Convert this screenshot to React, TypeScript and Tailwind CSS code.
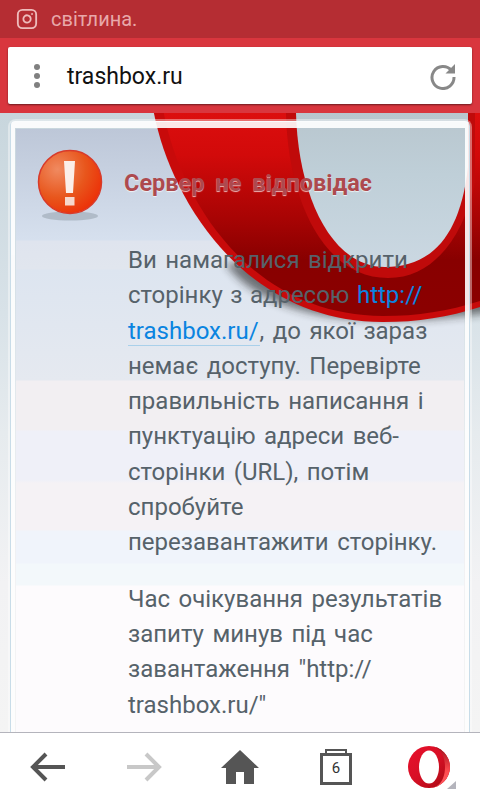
import { Instagram } from 'lucide-react';

function OperaBackdrop() {
  return (
    <svg className="absolute inset-0 w-full h-full" viewBox="0 0 480 619" preserveAspectRatio="none">
      <defs>
        <linearGradient id="ring" gradientUnits="userSpaceOnUse" x1="0" y1="0" x2="0" y2="210">
          <stop offset="0" stopColor="#dc0e0e" />
          <stop offset="0.2" stopColor="#d20a0a" />
          <stop offset="0.5" stopColor="#a80404" />
          <stop offset="0.7" stopColor="#880000" />
          <stop offset="1" stopColor="#8c0000" />
        </linearGradient>
        <linearGradient id="hole" gradientUnits="userSpaceOnUse" x1="0" y1="0" x2="0" y2="154">
          <stop offset="0" stopColor="#b8c6ce" />
          <stop offset="0.4" stopColor="#bfcfd8" />
          <stop offset="1" stopColor="#cbd8e2" />
        </linearGradient>
        <filter id="soft" x="-20%" y="-40%" width="140%" height="180%">
          <feGaussianBlur stdDeviation="4" />
        </filter>
      </defs>
      <path d="M225 150C270 212 380 216 500 198V150Z" fill="#222" opacity="0.6" filter="url(#soft)" />
      <path d="M150 -60V-30C155 60 230 209 383 209C425 209 460 202 500 187V-60Z" fill="#c80a0a" />
      <path d="M160 -60V-30C165 60 236 203 383 203C425 203 460 196 500 181V-60Z" fill="url(#ring)" />
      <path d="M286 -60V0C288 90 325 165 388 165C433 165 463 125 475 70V-60Z" fill="#c00a0a" />
      <path d="M296 -60V0C298 80 330 154 385 154C430 154 460 125 468 54V-60Z" fill="url(#hole)" />
    </svg>
  );
}

function ErrorBadge() {
  return (
    <svg width="72" height="74" viewBox="0 0 72 74" className="shrink-0">
      <defs>
        <radialGradient id="ball" cx="0.3" cy="0.3" r="0.9">
          <stop offset="0" stopColor="#f08a60" />
          <stop offset="0.5" stopColor="#e8561c" />
          <stop offset="1" stopColor="#ee2200" />
        </radialGradient>
      </defs>
      <ellipse cx="36" cy="67" rx="28" ry="4.5" fill="#7f8c96" opacity="0.4" />
      <circle cx="36" cy="33" r="31.5" fill="url(#ball)" stroke="#d83a2a" strokeWidth="1.5" />
      <path d="M30 12H41L39 44H32Z" fill="#fbefe9" />
      <rect x="31" y="48" width="9.5" height="8.5" fill="#f6d8cc" />
    </svg>
  );
}

export default function App() {
  return (
    <div className="w-[480px] h-[800px] flex flex-col overflow-hidden bg-white font-['Roboto',sans-serif]">
      <div className="h-[38px] bg-[#b52d33] flex items-center pl-[16px] pb-[1px] gap-[13px] text-[#e8a8aa]">
        <Instagram size={22} color="#eebcbc" strokeWidth={2} />
        <span className="text-[20px]">світлина.</span>
      </div>

      <div className="h-[75px] bg-[#d9363e] px-[8px] pt-[9px]">
        <div className="h-[57px] bg-white rounded-[2px] shadow-[0_1px_2px_rgba(0,0,0,0.5)] flex items-center">
          <div className="w-[59px] flex flex-col items-center gap-[3px] pr-[1px] mr-0">
            <span className="w-[6px] h-[6px] rounded-full bg-[#808080]" />
            <span className="w-[6px] h-[6px] rounded-full bg-[#808080]" />
            <span className="w-[6px] h-[6px] rounded-full bg-[#808080]" />
          </div>
          <span className="flex-1 text-[23px] text-[#111] pt-[3px]">trashbox.ru</span>
          <svg width="28" height="28" viewBox="0 0 28 28" className="mr-[15px]" fill="none">
            <path d="M22.5 8.5A11 11 0 1 0 25 15" stroke="#888" strokeWidth="3" />
            <path d="M16.5 11.5L26 2V11.5Z" fill="#888" />
          </svg>
        </div>
      </div>

      <div className="flex-1 relative overflow-hidden bg-[linear-gradient(#c8d6dd_0,#d8e2e8_200px,#e6ebee_320px,#f2f2f4_470px,#f4f4f4_619px)]">
        <div className="absolute left-[16px] top-[16px] w-[448px] h-[610px] bg-[linear-gradient(#bdc7d8_0,#d6e0ee_111px,#dfe4ee_112px,#e1e6ee_140px,#dde5f0_141px,#e5e9f0_251px,#f2eff2_252px,#f2eff2_301px,#eff0f8_302px,#eff0f8_351px,#f5f2f5_354px,#f5f2f5_401px,#f0f4fb_402px,#f0f4fb_434px,#f3f8fb_435px,#f3f8fb_456px,#fdfbfd_457px)]" />
        <OperaBackdrop />
        <div className="relative mx-[8px] mt-[6px] h-[640px] rounded-t-[8px] border-[2px] border-b-0 border-white/40">
          <div className="h-full border-[1px] border-b-0 border-[#c8dce8] rounded-t-[5px] mt-0">
            <div className="h-full border-[4px] border-t-[7px] border-b-0 border-white/90 -mt-[1px] rounded-t-[4px]">
              <div className="flex items-center pl-[19px] pt-[21px] h-[94px]">
                <ErrorBadge />
                <h1 className="ml-[18px] mb-[3px] text-[23.5px] font-bold text-[#ad4a4e] [word-spacing:5px] [text-shadow:0_1px_1px_rgba(255,255,255,0.7)] whitespace-nowrap">
                  Сервер не відповідає
                </h1>
              </div>
              <div className="pl-[113px] pt-[21px] text-[24px] leading-[35.3px] text-[#56626a] [word-spacing:2.5px] whitespace-nowrap">
                <p>
                  Ви намагалися відкрити
                  <br />
                  <span className="[word-spacing:1.5px]">сторінку з адресою </span>
                  <a className="text-[#0a84e0]">
                    http://
                    <br />
                    <span className="border-b border-[#a9d0ea] pr-[1px]">trashbox.ru/</span>
                  </a>
                  , до якої зараз
                  <br />
                  немає доступу. Перевірте
                  <br />
                  правильність написання і
                  <br />
                  пунктуацію адреси веб-
                  <br />
                  сторінки (URL), потім
                  <br />
                  спробуйте
                  <br />
                  перезавантажити сторінку.
                </p>
                <p className="mt-[21px]">
                  Час очікування результатів
                  <br />
                  запиту минув під час
                  <br />
                  завантаження "http://
                  <br />
                  trashbox.ru/"
                </p>
              </div>
            </div>
          </div>
        </div>
      </div>

      <div className="h-[68px] bg-white border-t border-t-[#b4b4bc] flex items-center relative shrink-0">
        <div className="w-[96px] flex justify-center">
          <svg width="36" height="32" viewBox="0 0 36 32" fill="none" stroke="#555" strokeWidth="4">
            <path d="M35 16H4M16 3L3 16L16 29" />
          </svg>
        </div>
        <div className="w-[96px] flex justify-center">
          <svg width="36" height="32" viewBox="0 0 36 32" fill="none" stroke="#c8c8c8" strokeWidth="4">
            <path d="M1 16H32M20 3L33 16L20 29" />
          </svg>
        </div>
        <div className="w-[96px] flex justify-center">
          <svg width="38" height="34" viewBox="0 0 38 34" fill="#555">
            <path d="M19 0L38 18H33V34H23V22H15V34H5V18H0Z" />
          </svg>
        </div>
        <div className="w-[96px] flex justify-center">
          <div className="relative w-[32px] h-[32px] mt-[4px] border-[3px] border-[#555] bg-white flex items-center justify-center text-[15px] text-[#333]">
            <span className="absolute -top-[7px] left-[2px] w-[22px] h-[5px] border-[2px] border-b-0 border-[#555]" />
            6
          </div>
        </div>
        <div className="w-[96px] flex justify-center relative">
          <svg width="48" height="44" viewBox="0 0 48 44">
            <defs>
              <linearGradient id="o" x1="0" y1="0" x2="0.9" y2="1">
                <stop offset="0" stopColor="#e8102c" />
                <stop offset="0.5" stopColor="#d80f25" />
                <stop offset="1" stopColor="#a90b14" />
              </linearGradient>
              <linearGradient id="oi" x1="0" y1="0" x2="0" y2="1">
                <stop offset="0" stopColor="#9b0f1a" />
                <stop offset="0.6" stopColor="#ff4b50" />
                <stop offset="1" stopColor="#ff5d62" />
              </linearGradient>
            </defs>
            <circle cx="21" cy="22" r="21" fill="url(#o)" />
            <path d="M21 1A21 21 0 0 1 21 43C33 43 37 32 37 22C37 12 33 1 21 1Z" fill="url(#oi)" />
            <ellipse cx="21" cy="22" rx="10" ry="16.5" fill="#fff" />
            <path d="M48 36V44H39Z" fill="#b4b4bc" />
          </svg>
        </div>
      </div>
    </div>
  );
}
